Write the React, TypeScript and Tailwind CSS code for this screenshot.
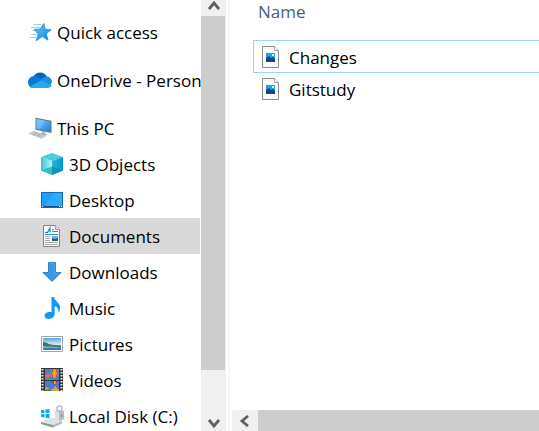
import type { ReactNode } from "react";

function QuickAccessIcon() {
  return (
    <svg viewBox="0 0 24 24" className="size-6 shrink-0" aria-hidden="true">
      <defs>
        <linearGradient id="star" x1="0" y1="0" x2="1" y2="1">
          <stop offset="0" stopColor="#62ccf8" />
          <stop offset="1" stopColor="#1583dc" />
        </linearGradient>
      </defs>
      <path d="M5 4.500h8M3 7.500h9M4.500 10.500h4M3 14.500h6M2 17.500h6" stroke="#8ccdf0" strokeWidth=".9" />
      <path
        d="M15.800 3.500l1.500 6 5.900.2-4.900 4 1.600 6.400-5.600-3.500-6.100 4.200 2-6.800-4-4.600 6-.3z"
        fill="url(#star)"
        stroke="#1c86d2"
        strokeWidth="0.800"
        strokeLinejoin="round"
      />
    </svg>
  );
}

function OneDriveIcon() {
  return (
    <svg viewBox="0 0 24 24" className="size-6 shrink-0" aria-hidden="true">
      <path d="M5.500 8.500A7.500 7.500 0 0 1 19 8.800L14 13 5.500 9z" fill="#0d62b8" />
      <path d="M4.800 20A5.300 5.300 0 0 1 0 14.400C0 11 2.600 8 6.200 8c1.300 0 2.500.4 3.600 1.100l5.700 3.700-9.500 6z" fill="#0a78d4" />
      <path d="M12.500 12.200c1.500-2.300 3.500-3.700 6-3.700 3 0 5.500 2.500 5.500 5.500L22 18z" fill="#1490df" />
      <path d="M1.500 18.500l11.200-5.700a2 2 0 0 1 1.800 0l9.200 4.500c-.8 1.800-2.200 2.700-4 2.700H5.200c-1.500 0-2.800-.5-3.700-1.500z" fill="#29a8ea" />
    </svg>
  );
}

function ComputerIcon() {
  return (
    <svg viewBox="0 0 24 24" className="size-6 shrink-0" aria-hidden="true">
      <defs>
        <linearGradient id="screen" x1="0" y1="0" x2="1" y2="1">
          <stop offset="0" stopColor="#74c8fa" />
          <stop offset="1" stopColor="#2380dc" />
        </linearGradient>
      </defs>
      <path d="M7.500 1.700L23.500 4.800V17L7.500 13.700z" fill="#60778a" />
      <path d="M8.500 3L22.500 5.700V15.500L8.500 12.700z" fill="url(#screen)" />
      <path d="M8.500 3l9 1.700-6 8.600-3-.6z" fill="#9ad9fc" opacity=".35" />
      <path d="M14 15l4 .8-1 2 3 .8-3 1-4-1z" fill="#a8b3bd" />
      <path d="M1 17.500L6 15.200 18 19.700 13.500 22.300z" fill="#cdd4da" stroke="#a0abb4" strokeWidth=".5" />
      <path d="M4 17.500l9 3.200M6 16.500l9 3.200M5 19l4-2M9 20.400l4-2" stroke="#929fa9" strokeWidth=".5" />
    </svg>
  );
}

function CubeIcon() {
  return (
    <svg viewBox="0 0 24 24" className="size-6 shrink-0" aria-hidden="true">
      <defs>
        <linearGradient id="cubeLeft" x1="0" y1="0" x2="1" y2="0">
          <stop offset="0" stopColor="#3fc3d2" />
          <stop offset="1" stopColor="#b4f5f3" />
        </linearGradient>
        <linearGradient id="cubeRight" x1="0" y1="0" x2="1" y2="0">
          <stop offset="0" stopColor="#21b7d6" />
          <stop offset="1" stopColor="#0795cf" />
        </linearGradient>
      </defs>
      <path d="M1 5L12 1 23 5 12 9z" fill="#4bcbdc" />
      <path d="M1 5L12 9v14L1 18.500z" fill="url(#cubeLeft)" />
      <path d="M1 18.500L12 14.500V23z" fill="#32bccb" />
      <path d="M12 9L23 5v13.500L12 23z" fill="url(#cubeRight)" />
      <path d="M12 14.500L23 18.500 12 23z" fill="#1292ad" />
    </svg>
  );
}

function DesktopIcon() {
  return (
    <svg viewBox="0 0 24 24" className="size-6 shrink-0" aria-hidden="true">
      <path d="M1 4h22v16H1z" fill="#126ba9" />
      <path d="M2 5h20v13H2z" fill="#1ba1fa" />
      <path d="M14 5h8v13H5z" fill="#3cafff" opacity=".6" />
      <path d="M2 18h20v1H2z" fill="#0b527d" />
      <path d="M2 18h1v1H2zM19 18h1v1h-1zM21 18h1v1h-1z" fill="#fff" />
    </svg>
  );
}

function DocumentIcon() {
  return (
    <svg viewBox="0 0 24 24" className="size-6 shrink-0" aria-hidden="true">
      <path d="M3.500 1.500h12l4 4v17h-16z" fill="#fafafa" stroke="#858585" />
      <path d="M15.500 1.500v4h4" fill="#e7e7e7" stroke="#a0a0a0" />
      <path d="M5 8.500h2.500L10 4v4.500" stroke="#168bd4" strokeWidth="1.200" fill="none" />
      <path d="M12 5.500h2M12 7.500h6M5 10.500h13" stroke="#2794d3" />
      <path d="M5 12.500h5M5 14.500h5M5 16.500h5M5 18.500h13M5 20.500h13" stroke="#adadad" />
      <path d="M12 12h6v5h-6z" fill="#72b7dc" />
      <path d="M12 14l3 1 3-1v3h-6z" fill="#315e69" />
    </svg>
  );
}

function DownloadIcon() {
  return (
    <svg viewBox="0 0 24 24" className="size-6 shrink-0" aria-hidden="true">
      <path d="M8.500 2.500h7v10H21L12 21.500 3 12.500h5.500z" fill="#3a98e8" stroke="#3183cb" />
      <path d="M9.500 3.500h5v10h3.500" stroke="#4ba4ee" fill="none" />
    </svg>
  );
}

function MusicIcon() {
  return (
    <svg viewBox="0 0 24 24" className="size-6 shrink-0" aria-hidden="true">
      <path
        d="M11.500 1h2.500c.4 4 6.200 5.700 6.200 10.800 0 2.200-.7 3.800-1.800 5.200.5-3.800-.7-6-3.700-6.700v7.500c0 3-2.600 5.200-5.900 5.200-2.600 0-4.300-1.300-4.300-3.300 0-2.600 3.300-4.400 7-3.600z"
        fill="#129af0"
      />
    </svg>
  );
}

function PicturesIcon() {
  return (
    <svg viewBox="0 0 24 24" className="size-6 shrink-0" aria-hidden="true">
      <defs>
        <linearGradient id="sky" x1="0" y1="0" x2="0" y2="1">
          <stop offset="0" stopColor="#55a9e2" />
          <stop offset="1" stopColor="#e1f0ef" />
        </linearGradient>
      </defs>
      <path d="M1.500 4.500h21v15h-21z" fill="#fff" stroke="#a0a5a8" />
      <path d="M3 6h18v7H3z" fill="url(#sky)" />
      <path d="M3 13h18v5H3z" fill="#6fb0cf" />
      <path d="M3 10c3 0 5 2 8 2.500l10 1.300V15c-6 0-13-1-18-1z" fill="#42745c" />
      <path d="M3 16.500c6-1 12 0 18-1V18H3z" fill="#347daa" />
    </svg>
  );
}

function VideosIcon() {
  return (
    <svg viewBox="0 0 24 24" className="size-6 shrink-0" aria-hidden="true">
      <path d="M1 0h22v23H1z" fill="#353535" />
      <path d="M2.500 1v22M21.500 1v22" stroke="#e8e8e8" strokeWidth="2" strokeDasharray="1.500 1.500" />
      <path d="M5 1h14v11H5zM5 13h14v10H5z" fill="#477cde" />
      <ellipse cx="14.500" cy="5.500" rx="4" ry="4.500" fill="#e0b01c" />
      <path d="M13 1.500q-3 4 0 8M16 1.500q3 4 0 8" stroke="#b63028" fill="none" />
      <path d="M5 7l3-2 3 3-3 2-3-1z" fill="#e36589" />
      <path d="M5 10l3-1 5 2v1H5z" fill="#35a578" />
      <path d="M11 13h7l-3.500 4z" fill="#b83135" />
      <path d="M14 13h1.500v3H14z" fill="#edc832" />
      <path d="M5 20l2-1 3 2h3l2-3 3 3h1v2H5z" fill="#e2a03d" />
      <path d="M5 22l5-1 2 2H5z" fill="#37834c" />
    </svg>
  );
}

function DiskIcon() {
  return (
    <svg viewBox="0 0 24 24" className="size-6 shrink-0" aria-hidden="true">
      <path d="M1 6.300l3.500-.5V9H1zM5.500 5.600L9.500 5v4h-4zM1 10h3.500v3.500L1 13zM5.500 10h4v4.300l-4-.6z" fill="#12a9e8" />
      <path d="M1 18l8-4h13v3l-9 4z" fill="#dfe2e5" />
      <path d="M1 18l12 3v2.500L1 20z" fill="#8d9398" />
      <path d="M13 21l9-4v2.500l-9 4z" fill="#b5babe" />
      <path d="M10 22l2 .5" stroke="#50d477" />
      <path d="M17 7V3.500a2.800 2.800 0 0 1 5 0V8" stroke="#b6bdc3" strokeWidth="1.500" fill="none" />
      <path d="M15 7l5-1 4 1v8l-5 2-4-2z" fill="#b0bbc3" />
      <path d="M15 7l4 1.200V17l-4-2z" fill="#dce2e6" />
      <path d="M21.500 10.500v2.500" stroke="#738491" />
    </svg>
  );
}

function ImageFileIcon() {
  return (
    <svg viewBox="0 0 18 22" className="h-[22px] w-[18px] shrink-0" aria-hidden="true">
      <path d="M.5.500h12l4 4v17H.5z" fill="#fafafa" stroke="#8c8c8c" />
      <path d="M12.500.500v4h4" fill="#fff" stroke="#a0a0a0" />
      <path d="M4 7h9v9H4z" fill="#22a2ec" />
      <path d="M4 12l3-2 2 2 2-1 2 2v3H4z" fill="#164783" />
      <path d="M10 8h2v2h-2z" fill="#eefaff" />
    </svg>
  );
}

function Chevron({ d }: { d: string }) {
  return (
    <svg viewBox="0 0 12 12" className="size-3" aria-hidden="true">
      <path d={d} fill="none" stroke="#606060" strokeWidth="2.800" />
    </svg>
  );
}

type Place = { label: string; icon: ReactNode; selected?: boolean };

const roots: Place[] = [
  { label: "Quick access", icon: <QuickAccessIcon /> },
  { label: "OneDrive - Person", icon: <OneDriveIcon /> },
  { label: "This PC", icon: <ComputerIcon /> },
];

const folders: Place[] = [
  { label: "3D Objects", icon: <CubeIcon /> },
  { label: "Desktop", icon: <DesktopIcon /> },
  { label: "Documents", icon: <DocumentIcon />, selected: true },
  { label: "Downloads", icon: <DownloadIcon /> },
  { label: "Music", icon: <MusicIcon /> },
  { label: "Pictures", icon: <PicturesIcon /> },
  { label: "Videos", icon: <VideosIcon /> },
  { label: "Local Disk (C:)", icon: <DiskIcon /> },
];

const files = ["Changes", "Gitstudy"];

export default function App() {
  return (
    <div className="flex h-screen overflow-hidden bg-white font-['Segoe_UI','Open_Sans',sans-serif] text-[17px] leading-6 text-black">
      <nav aria-label="Folders" className="w-[201px] shrink-0 pt-3.5">
        <ul className="flex flex-col gap-3">
          {roots.map((p) => (
            <li key={p.label}>
              <button type="button" className="flex h-9 w-full items-center gap-[5px] pl-7 whitespace-nowrap">
                {p.icon}
                <span className="pt-0.5">{p.label}</span>
              </button>
            </li>
          ))}
        </ul>
        <ul className="pr-px">
          {folders.map((p) => (
            <li key={p.label}>
              <button
                type="button"
                aria-current={p.selected}
                className={`flex h-9 w-full items-center gap-[5px] pl-10 whitespace-nowrap ${p.selected ? "bg-[#d9d9d9]" : ""}`}
              >
                {p.icon}
                <span className="pt-0.5">{p.label}</span>
              </button>
            </li>
          ))}
        </ul>
      </nav>

      <div className="flex w-[25px] shrink-0 flex-col bg-[#f0f0f0]">
        <button type="button" aria-label="Scroll up" className="flex h-4 items-start justify-center">
          <Chevron d="M1 9l5-6 5 6" />
        </button>
        <div className="mr-px grow-[71] basis-0 bg-[#cdcdcd]" />
        <div className="grow-[9] basis-0" />
        <button type="button" aria-label="Scroll down" className="flex h-4 items-center justify-center">
          <Chevron d="M1 3l5 6 5-6" />
        </button>
      </div>

      <main className="ml-0.5 flex min-w-0 flex-1 flex-col border-l-2 border-[#f7f7f7] pl-0.5">
        <div className="min-h-0 flex-1 pl-[21px]">
          <button type="button" className="flex h-6 items-center pl-[5px] text-[#4c607a]">
            Name
          </button>
          <ul className="pt-4">
            {files.map((name, i) => (
              <li key={name}>
                <button
                  type="button"
                  className={`flex w-full items-center gap-[9px] border border-r-0 pl-2 ${i === 0 ? "h-[33px] border-[#99d1ff]" : "h-8 border-transparent"}`}
                >
                  <ImageFileIcon />
                  <span className="pt-0.5">{name}</span>
                </button>
              </li>
            ))}
          </ul>
        </div>
        <div className="flex h-[21px] shrink-0 bg-[#f0f0f0]">
          <button type="button" aria-label="Scroll left" className="flex w-[26px] items-center justify-center">
            <Chevron d="M9 1L3 6l6 5" />
          </button>
          <div className="flex-1 bg-[#cdcdcd]" />
        </div>
      </main>
    </div>
  );
}
